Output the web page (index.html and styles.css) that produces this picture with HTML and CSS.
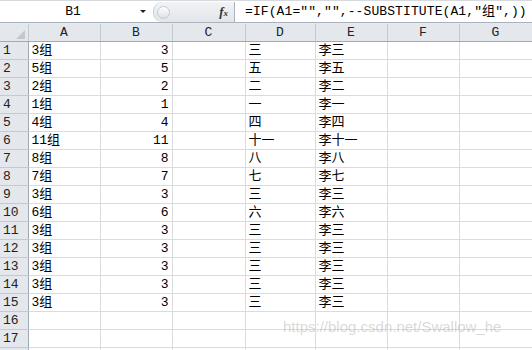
FILE: index.html
```html
<!DOCTYPE html>
<html lang="zh-CN">
<head>
    <meta charset="UTF-8">
    <title>Sheet1</title>
    <link rel="stylesheet" href="styles.css">
</head>
<body>
    <div class="formula-bar">
        <div class="name-box">
            <span class="cell-ref">B1</span>
            <span class="drop-arrow"></span>
        </div>
        <div class="fx-area">
            <span class="grip"></span>
            <span class="fx">f<sub>x</sub></span>
        </div>
        <div class="formula">=IF(A1="","",--SUBSTITUTE(A1,"组",))</div>
    </div>

    <div class="sheet">
        <table class="grid">
            <colgroup>
                <col class="c-head">
                <col class="c-a">
                <col class="c-b">
                <col class="c-c">
                <col class="c-d">
                <col class="c-e">
                <col class="c-f">
                <col class="c-g">
            </colgroup>
            <thead>
                <tr>
                    <th class="corner"><span class="corner-tri"></span></th>
                    <th>A</th><th>B</th><th>C</th><th>D</th><th>E</th><th>F</th><th>G</th>
                </tr>
            </thead>
            <tbody>
                <tr><th>1</th><td>3组</td><td class="num">3</td><td></td><td>三</td><td>李三</td><td></td><td></td></tr>
                <tr><th>2</th><td>5组</td><td class="num">5</td><td></td><td>五</td><td>李五</td><td></td><td></td></tr>
                <tr><th>3</th><td>2组</td><td class="num">2</td><td></td><td>二</td><td>李二</td><td></td><td></td></tr>
                <tr><th>4</th><td>1组</td><td class="num">1</td><td></td><td>一</td><td>李一</td><td></td><td></td></tr>
                <tr><th>5</th><td>4组</td><td class="num">4</td><td></td><td>四</td><td>李四</td><td></td><td></td></tr>
                <tr><th>6</th><td>11组</td><td class="num">11</td><td></td><td>十一</td><td>李十一</td><td></td><td></td></tr>
                <tr><th>7</th><td>8组</td><td class="num">8</td><td></td><td>八</td><td>李八</td><td></td><td></td></tr>
                <tr><th>8</th><td>7组</td><td class="num">7</td><td></td><td>七</td><td>李七</td><td></td><td></td></tr>
                <tr><th>9</th><td>3组</td><td class="num">3</td><td></td><td>三</td><td>李三</td><td></td><td></td></tr>
                <tr><th>10</th><td>6组</td><td class="num">6</td><td></td><td>六</td><td>李六</td><td></td><td></td></tr>
                <tr><th>11</th><td>3组</td><td class="num">3</td><td></td><td>三</td><td>李三</td><td></td><td></td></tr>
                <tr><th>12</th><td>3组</td><td class="num">3</td><td></td><td>三</td><td>李三</td><td></td><td></td></tr>
                <tr><th>13</th><td>3组</td><td class="num">3</td><td></td><td>三</td><td>李三</td><td></td><td></td></tr>
                <tr><th>14</th><td>3组</td><td class="num">3</td><td></td><td>三</td><td>李三</td><td></td><td></td></tr>
                <tr><th>15</th><td>3组</td><td class="num">3</td><td></td><td>三</td><td>李三</td><td></td><td></td></tr>
                <tr><th>16</th><td></td><td></td><td></td><td></td><td></td><td></td><td></td></tr>
                <tr><th>17</th><td></td><td></td><td></td><td></td><td></td><td></td><td></td></tr>
                <tr><th></th><td></td><td></td><td></td><td></td><td></td><td></td><td></td></tr>
            </tbody>
        </table>
        <div class="watermark">https://blog.csdn.net/Swallow_he</div>
    </div>
</body>
</html>
```

FILE: styles.css
```css
body {
    margin: 0;
    width: 532px;
    height: 350px;
    overflow: hidden;
    background: #fff;
    font-family: "Liberation Mono", "Noto Sans CJK SC", monospace;
    font-size: 13px;
    color: #000;
}
.formula-bar {
    display: flex;
    height: 21px;
    border-top: 1px solid #d5d9de;
    border-bottom: 1px solid #a9b2bd;
    background: #fff;
}
.name-box {
    width: 150px;
    display: flex;
    align-items: center;
    position: relative;
}
.cell-ref {
    flex: 1;
    text-align: center;
    padding-left: 6px;
    line-height: 21px;
}
.drop-arrow {
    width: 0;
    height: 0;
    border-left: 3px solid transparent;
    border-right: 3px solid transparent;
    border-top: 3px solid #222;
    margin-right: 4px;
}
.fx-area {
    width: 80px;
    display: flex;
    align-items: center;
    justify-content: space-between;
    background: linear-gradient(#f1f3f5, #e2e6ea);
    border-left: 1px solid #c8ced5;
    border-right: 1px solid #a9b2bd;
    border-radius: 9px 0 0 9px;
    margin: 1px 0 0 3px;
}
.grip {
    width: 11px;
    height: 11px;
    margin-left: 3px;
    border-radius: 50%;
    border: 1px solid #c4cad1;
    background: linear-gradient(#fdfdfd, #dde1e6);
}
.fx {
    font-family: "Liberation Serif", serif;
    font-style: italic;
    font-weight: bold;
    font-size: 13px;
    color: #333;
    margin-right: 6px;
}
.fx sub {
    font-size: 9px;
    vertical-align: baseline;
}
.formula {
    flex: 1;
    padding-left: 10px;
    line-height: 21px;
    letter-spacing: 0.1px;
    white-space: nowrap;
    overflow: hidden;
}
.sheet {
    position: relative;
    border-top: 1px solid #e6e9ed;
}
.grid {
    border-collapse: collapse;
    table-layout: fixed;
    width: 532px;
}
.c-head { width: 28px; }
.c-a, .c-b, .c-e, .c-f { width: 72px; }
.c-c, .c-g { width: 73px; }
.c-d { width: 70px; }
.grid th,
.grid td {
    height: 17px;
    padding: 0 3px;
    border-right: 1px solid #d9dbdd;
    border-bottom: 1px solid #d9dbdd;
    white-space: nowrap;
    overflow: hidden;
    line-height: 17px;
}
.grid th {
    background: #e4e7eb;
    font-weight: normal;
    text-align: center;
    color: #222;
    border-color: #c5cad0;
    padding: 0;
}
.grid thead th {
    border-bottom-color: #9eaab7;
}
.grid tbody th {
    text-align: left;
    padding-left: 3px;
    border-right-color: #9eaab7;
}
.grid td.num {
    text-align: right;
}
.corner {
    position: relative;
}
.corner-tri {
    position: absolute;
    right: 3px;
    bottom: 2px;
    width: 0;
    height: 0;
    border-left: 9px solid transparent;
    border-bottom: 9px solid #c4c8cc;
}
.watermark {
    position: absolute;
    left: 283px;
    top: 294px;
    font-family: "Liberation Sans", Arial, sans-serif;
    font-size: 15px;
    color: rgba(170, 170, 170, 0.45);
}
```
